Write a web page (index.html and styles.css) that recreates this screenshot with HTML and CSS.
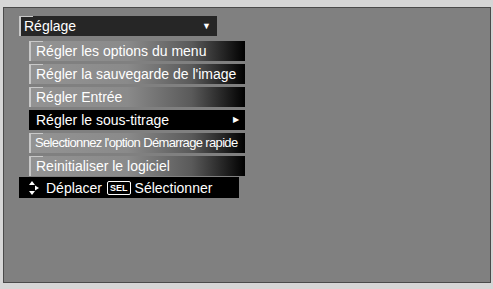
FILE: index.html
```html
<!DOCTYPE html>
<html>
<head>
<meta charset="utf-8">
<link rel="stylesheet" href="styles.css">
</head>
<body>
<div class="panel">
  <div class="menu">
    <div class="header"><span>Réglage</span><span class="down">▼</span></div>
    <div class="items">
      <div class="item">Régler les options du menu</div>
      <div class="item">Régler la sauvegarde de l'image</div>
      <div class="item">Régler Entrée</div>
      <div class="item selected"><span>Régler le sous-titrage</span><span class="right">▶</span></div>
      <div class="item narrow">Selectionnez l'option Démarrage rapide</div>
      <div class="item">Reinitialiser le logiciel</div>
    </div>
    <div class="footer">
      <svg class="nav" width="12" height="16" viewBox="0 0 12 16">
        <polygon points="4,1 7,5 1,5" fill="#fff"/>
        <polygon points="4,15 7,11 1,11" fill="#fff"/>
        <polygon points="7,5.5 11,8 7,10.5" fill="#fff"/>
      </svg>
      <span class="lbl">Déplacer</span>
      <span class="sel">SEL</span>
      <span class="lbl">Sélectionner</span>
    </div>
  </div>
</div>
</body>
</html>
```
FILE: styles.css
```css
* { box-sizing: border-box; }
html, body {
  margin: 0;
  padding: 0;
  background: #d6d6d6;
  width: 493px;
  height: 289px;
  overflow: hidden;
}
.panel {
  margin: 7px 0 0 3px;
  width: 488px;
  height: 276px;
  background: #808080;
  border: 1px solid #4a4a4a;
  font-family: "Liberation Sans", Arial, sans-serif;
  color: #fff;
  font-size: 14px;
}
.menu {
  padding: 8px 0 0 15px;
  display: flex;
  flex-direction: column;
}
.header {
  position: relative;
  width: 198px;
  height: 20px;
  background: #262626;
  border-left: 2px solid #c8c8c8;
  display: flex;
  align-items: center;
  justify-content: space-between;
  padding: 0 6px 0 3px;
}
.header::before, .item::before {
  content: "";
  position: absolute;
  left: -2px;
  top: 0;
  width: 14px;
  height: 1px;
  background: #c8c8c8;
}
.down { font-size: 9px; }
.items {
  margin: 5px 0 0 10px;
  display: flex;
  flex-direction: column;
  gap: 3px;
}
.item {
  position: relative;
  width: 216px;
  height: 20px;
  line-height: 20px;
  padding-left: 5px;
  border-left: 2px solid #c8c8c8;
  background: linear-gradient(to right, #939393 0%, #8a8a8a 45%, #5a5a5a 75%, #000 100%);
  white-space: nowrap;
}
.item.selected {
  background: #000;
  border-left-color: #000;
  display: flex;
  justify-content: space-between;
  padding: 0 6px 0 5px;
}
.item.selected::before { display: none; }
.right { font-size: 8px; }
.narrow { font-size: 13px; letter-spacing: -0.65px; padding-left: 4px; }
.footer {
  margin-top: 1px;
  width: 220px;
  height: 21px;
  background: #000;
  display: flex;
  align-items: center;
  padding-left: 9px;
}
.nav { margin-right: 6px; }
.sel {
  font-size: 9px;
  font-weight: bold;
  border: 1px solid #fff;
  border-radius: 2px;
  padding: 1px 2px;
  margin: 0 4px 0 5px;
  line-height: 10px;
}
```
